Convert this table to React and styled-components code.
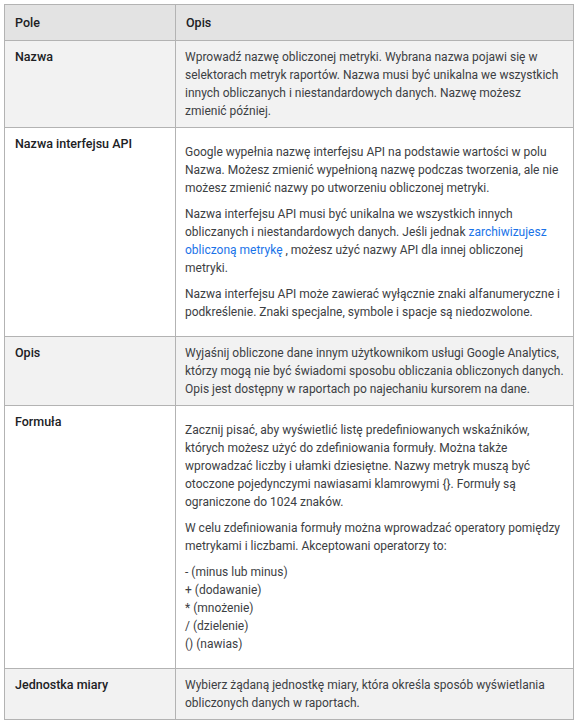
import styled, { createGlobalStyle } from "styled-components";

const GlobalStyle = createGlobalStyle`
    html, body {
        margin: 0;
        padding: 0;
        background: #ffffff;
    }
    body {
        font-family: Roboto, "Noto Sans", Arial, sans-serif;
    }
`;

const Page = styled.div`
    padding: 4px;
`;

const Table = styled.table`
    width: 570px;
    border-collapse: collapse;
    font-family: Roboto, Arial, sans-serif;
    font-size: 12px;
    line-height: 18px;
    color: #3c4043;
`;

const HeadCell = styled.th`
    text-align: left;
    font-weight: 500;
    font-size: 12.5px;
    color: #202124;
    background: #e3e3e3;
    border: 1px solid #b3b3b3;
    height: 35px;
    padding: 0 10px;
    width: ${({ $w }) => $w || "auto"};
`;

const Row = styled.tr`
    background: ${({ $shaded }) => ($shaded ? "#f2f2f2" : "#ffffff")};
`;

const FieldCell = styled.td`
    vertical-align: top;
    border: 1px solid #b3b3b3;
    padding: 7px 10px 7px 10px;
    font-weight: 500;
    font-size: 12.5px;
    color: #202124;
`;

const DescCell = styled.td`
    vertical-align: top;
    border: 1px solid #b3b3b3;
    padding: 7px 8px 7px 9px;
`;

const Para = styled.p`
    margin: 8px 0;
`;

const Link = styled.a`
    color: #1a73e8;
    text-decoration: none;
`;

export default function App() {
    return (
        <Page>
            <GlobalStyle />
            <Table>
                <thead>
                    <tr>
                        <HeadCell $w="150px">Pole</HeadCell>
                        <HeadCell>Opis</HeadCell>
                    </tr>
                </thead>
                <tbody>
                    <Row $shaded>
                        <FieldCell>Nazwa</FieldCell>
                        <DescCell>
                            Wprowadź nazwę obliczonej metryki. Wybrana nazwa pojawi się w
                            selektorach metryk raportów. Nazwa musi być unikalna we wszystkich
                            innych obliczanych i niestandardowych danych. Nazwę możesz zmienić
                            później.
                        </DescCell>
                    </Row>
                    <Row>
                        <FieldCell>Nazwa interfejsu API</FieldCell>
                        <DescCell>
                            <Para>
                                Google wypełnia nazwę interfejsu API na podstawie wartości w polu
                                Nazwa. Możesz zmienić wypełnioną nazwę podczas tworzenia, ale nie
                                możesz zmienić nazwy po utworzeniu obliczonej metryki.
                            </Para>
                            <Para>
                                Nazwa interfejsu API musi być unikalna we wszystkich innych
                                obliczanych i niestandardowych danych. Jeśli jednak{" "}
                                <Link href="#">zarchiwizujesz obliczoną metrykę</Link> , możesz
                                użyć nazwy API dla innej obliczonej metryki.
                            </Para>
                            <Para>
                                Nazwa interfejsu API może zawierać wyłącznie znaki alfanumeryczne i
                                podkreślenie. Znaki specjalne, symbole i spacje są niedozwolone.
                            </Para>
                        </DescCell>
                    </Row>
                    <Row $shaded>
                        <FieldCell>Opis</FieldCell>
                        <DescCell>
                            Wyjaśnij obliczone dane innym użytkownikom usługi Google Analytics,
                            którzy mogą nie być świadomi sposobu obliczania obliczonych danych.
                            Opis jest dostępny w raportach po najechaniu kursorem na dane.
                        </DescCell>
                    </Row>
                    <Row>
                        <FieldCell>Formuła</FieldCell>
                        <DescCell>
                            <Para>
                                Zacznij pisać, aby wyświetlić listę predefiniowanych wskaźników,
                                których możesz użyć do zdefiniowania formuły. Można także
                                wprowadzać liczby i ułamki dziesiętne. Nazwy metryk muszą być
                                otoczone pojedynczymi nawiasami klamrowymi {"{}"}. Formuły są
                                ograniczone do 1024 znaków.
                            </Para>
                            <Para>
                                W celu zdefiniowania formuły można wprowadzać operatory pomiędzy
                                metrykami i liczbami. Akceptowani operatorzy to:
                            </Para>
                            <Para>
                                - (minus lub minus)
                                <br />+ (dodawanie)
                                <br />* (mnożenie)
                                <br />/ (dzielenie)
                                <br />() (nawias)
                            </Para>
                        </DescCell>
                    </Row>
                    <Row $shaded>
                        <FieldCell>Jednostka miary</FieldCell>
                        <DescCell>
                            Wybierz żądaną jednostkę miary, która określa sposób wyświetlania
                            obliczonych danych w raportach.
                        </DescCell>
                    </Row>
                </tbody>
            </Table>
        </Page>
    );
}
